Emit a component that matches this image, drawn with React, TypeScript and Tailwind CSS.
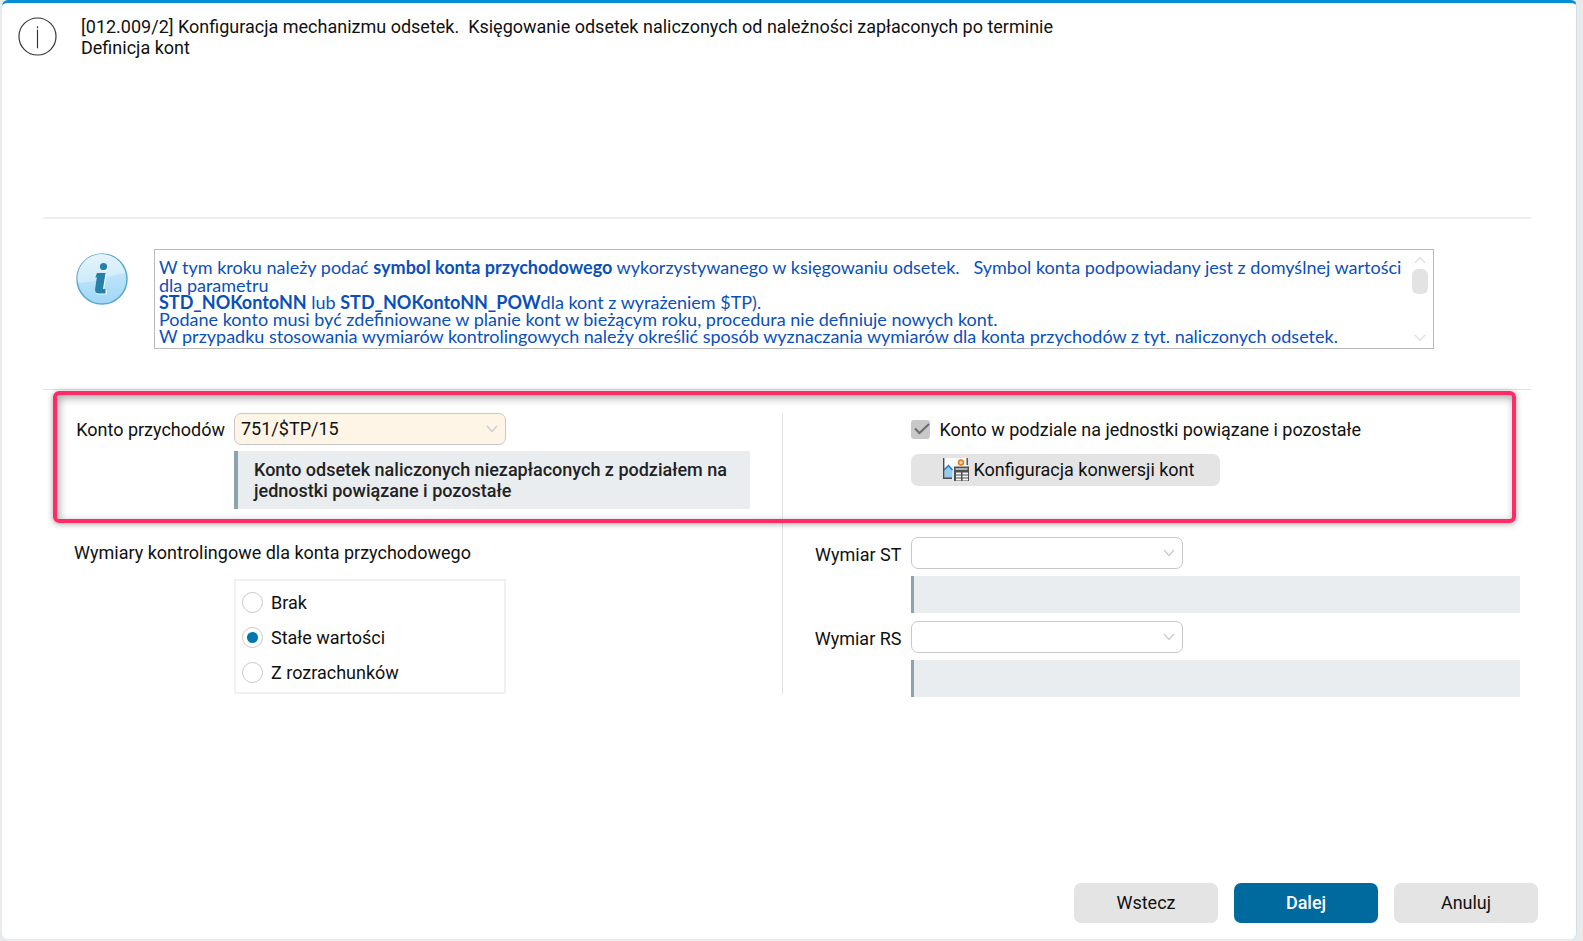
import { useState } from "react"
import type { ReactNode } from "react"

const dimensionModes = ["Brak", "Stałe wartości", "Z rozrachunków"]

function Chevron({ className, up }: { className?: string; up?: boolean }) {
  return (
    <svg viewBox="0 0 12 8" className={`h-2 w-3 ${className ?? ""}`} fill="none" stroke="currentColor" strokeWidth="1.5">
      <path d={up ? "M1 7 L6 1.5 L11 7" : "M1 1 L6 6.5 L11 1"} />
    </svg>
  )
}

function SelectBox({ id, options, filled }: { id: string; options: string[]; filled?: boolean }) {
  return (
    <div className="relative w-[272px]">
      <select
        id={id}
        className={`block h-8 w-full appearance-none rounded-[7px] border border-[#c8c8c8] pb-[2px] pl-[6px] pr-7 outline-none ${
          filled ? "bg-[#fff5e6]" : "bg-white"
        }`}
      >
        {options.map((option) => (
          <option key={option}>{option}</option>
        ))}
      </select>
      <Chevron className="pointer-events-none absolute right-2 top-3 text-[#cccccc]" />
    </div>
  )
}

function FooterButton({ children, primary }: { children: ReactNode; primary?: boolean }) {
  return (
    <button
      type="button"
      className={`h-10 w-36 rounded-[7px] pb-[2px] ${primary ? "bg-[#006a9f] font-medium text-white" : "bg-[#e4e4e4]"}`}
    >
      {children}
    </button>
  )
}

function InfoBadge() {
  return (
    <svg viewBox="0 0 52 52" className="size-[52px] shrink-0">
      <defs>
        <linearGradient id="badge" x1="0" y1="0" x2="0" y2="1">
          <stop offset="0" stopColor="#d3edf9" />
          <stop offset="1" stopColor="#9fd7f8" />
        </linearGradient>
        <linearGradient id="gloss" x1="0" y1="0" x2="0" y2="1">
          <stop offset="0" stopColor="#e3f4fc" />
          <stop offset="1" stopColor="#cfeafa" />
        </linearGradient>
      </defs>
      <circle cx="26" cy="26" r="25" fill="url(#badge)" stroke="#5ba7cb" strokeWidth="1.5" />
      <path d="M2 30 A24 24 0 1 1 49 20 C36 21 22 30 2 30Z" fill="url(#gloss)" />
      <g fill="#f4fbff">
        <circle cx="28.5" cy="14.5" r="3.6" />
        <path d="M21 21.5 h9.5 l-2.5 15.5 h3 v4.5 h-8 q-4 0 -3.4 -4 l1.8 -11.5 h-1.5z" />
      </g>
      <g fill="#2681aa">
        <circle cx="27.5" cy="13.5" r="3.6" />
        <path d="M21 20 h8.5 l-2.5 16 h2.5 v4.5 h-6.5 q-4.500 0 -3.9 -4.5 l1.7 -11.5 h-1.5z" />
      </g>
    </svg>
  )
}

function ConversionIcon() {
  return (
    <svg viewBox="0 0 26 23" className="h-[23px] w-[26px] shrink-0">
      <path d="M1 0 H24 V12 H10 V21 H1Z" fill="#fafafa" />
      <path d="M1.5 12 L5.5 7.5 L9.5 12 V20 H1.5Z" fill="#91cbf0" />
      <path d="M1 12 L5.5 7.5 L9.5 12" fill="none" stroke="#1c78c8" strokeWidth="1.5" />
      <path d="M0.7 0 V20.3 H9" fill="none" stroke="#4a4a4a" strokeWidth="1.4" />
      <path d="M24.2 0 V7" stroke="#4a4a4a" strokeWidth="1.4" />
      <circle cx="18" cy="4.5" r="2.4" fill="#fbd7b5" stroke="#e87d1e" strokeWidth="1.6" />
      <path d="M11 8.5 H26 V23 H11Z" fill="#505050" />
      <path d="M12.5 11 H24.500" stroke="#f4f4f4" strokeWidth="1.2" />
      <path d="M13 15.500 H18 M19.5 15.5 H25 M13 18.500 H18 M19.5 18.5 H25 M13 21.500 H18 M19.5 21.5 H25" stroke="#f4f4f4" strokeWidth="1.8" />
    </svg>
  )
}

export default function App() {
  const [mode, setMode] = useState("Stałe wartości")

  return (
    <div className="flex min-h-screen flex-col bg-[#e9eaeb] pb-[2px] pl-[2px] pr-[6px] font-['Roboto',sans-serif] text-[18px] leading-[21px] text-[#111111]">
      <main className="flex flex-1 flex-col rounded-md border-r border-t-[3px] border-r-[#cfe0ea] border-t-[#058dd8] bg-white">
        <header className="flex h-[214px] items-start gap-[24px] pl-[16px] pt-[13px]">
          <svg viewBox="0 0 40 40" className="mt-px size-[39px] shrink-0" fill="none" stroke="#333333">
            <circle cx="20" cy="20" r="19" strokeWidth="1.2" />
            <path d="M20 9.5 V11.5 M20 13 V32" strokeWidth="1.2" />
          </svg>
          <h1 className="whitespace-pre-wrap">
            {"[012.009/2] Konfiguracja mechanizmu odsetek.  Księgowanie odsetek naliczonych od należności zapłaconych po terminie\nDefinicja kont"}
          </h1>
        </header>

        <section className="ml-[41px] mr-[45px] flex h-[173px] items-start gap-[26px] border-b border-t-2 border-b-[#e2e2e2] border-t-[#eeeeee] pl-[33px] pr-[97px] pt-[30px]">
          <div className="pt-1">
            <InfoBadge />
          </div>
          <div className="flex h-[100px] flex-1 justify-between overflow-hidden border border-[#b9b9b9] pl-[4px] pr-[5px] font-['Lato',sans-serif] text-[18px] leading-[17px] text-[#0a50bb]">
            <div className="flex-1 pr-2 pt-2">
              <p className="whitespace-pre-wrap leading-[18px]">
                W tym kroku należy podać <b>symbol konta przychodowego</b>
                {" wykorzystywanego w księgowaniu odsetek.   Symbol konta podpowiadany jest z domyślnej wartości dla parametru"}
              </p>
              <p>
                <b>STD_NOKontoNN</b> lub <b>STD_NOKontoNN_POW</b>dla kont z wyrażeniem $TP).
              </p>
              <p>Podane konto musi być zdefiniowane w planie kont w bieżącym roku, procedura nie definiuje nowych kont.</p>
              <p>
                W przypadku stosowania wymiarów kontrolingowych należy określić sposób wyznaczania wymiarów dla konta
                przychodów z tyt. naliczonych odsetek.
              </p>
            </div>
            <div className="flex w-4 flex-col items-center pb-[6px] pt-[6px] text-[#e2e2e2]">
              <Chevron up />
              <div className="mt-[5px] h-[25px] w-4 rounded-md bg-[#e3e3e3]" />
              <Chevron className="mt-auto" />
            </div>
          </div>
        </section>

        <section className="relative ml-[41px] mr-[56px] grid grid-cols-2 pt-[23px]">
          {/* frame around the account row */}
          <div className="pointer-events-none absolute left-[10px] right-1 top-px h-[132px] rounded-md border-4 border-[#ff2a68] shadow-[0_1px_6px_rgba(0,0,0,0.35),inset_2px_3px_8px_rgba(0,0,0,0.35)]" />

          <div className="grid grid-cols-[191px_1fr] content-start">
            <label htmlFor="account" className="pr-[9px] pt-[6px] text-right">
              Konto przychodów
            </label>
            <SelectBox id="account" options={["751/$TP/15"]} filled />
            <p className="col-start-2 mr-[32px] mt-[6px] h-[58px] border-l-4 border-[#8da3ad] bg-[#eaedf0] pl-[16px] pt-[8px] font-medium text-[#222222]">
              Konto odsetek naliczonych niezapłaconych z podziałem na jednostki powiązane i pozostałe
            </p>

            <fieldset className="col-span-2 mt-[33px]">
              <legend className="pl-[31px]">Wymiary kontrolingowe dla konta przychodowego</legend>
              <div className="ml-[191px] mt-[16px] flex h-[115px] w-[272px] flex-col justify-center gap-[14px] border-2 border-[#f0f0f0] pl-[6px] pt-[2px]">
                {dimensionModes.map((name) => (
                  <label key={name} className="flex items-center gap-2">
                    <input
                      type="radio"
                      name="mode"
                      checked={mode === name}
                      onChange={() => setMode(name)}
                      className="grid size-[21px] appearance-none place-items-center rounded-full border border-[#c8c8c8] bg-white checked:before:size-[11px] checked:before:rounded-full checked:before:bg-[#0076b0]"
                    />
                    {name}
                  </label>
                ))}
              </div>
            </fieldset>
          </div>

          <div className="flex flex-col border-l border-[#e2e2e2]">
            <div className="flex h-[124px] flex-col items-start pl-[128px]">
              <label className="flex items-center gap-[10px] pt-[6px]">
                <span className="relative size-[19px]">
                  <input type="checkbox" checked disabled className="block size-[19px] appearance-none rounded-[3px] bg-[#c8c8c8]" />
                  <svg viewBox="0 0 19 19" className="absolute left-0 top-0 size-[19px]" fill="none" stroke="#6b6b6b" strokeWidth="2">
                    <path d="M4 8.5 L8.5 13 L18 4" />
                  </svg>
                </span>
                Konto w podziale na jednostki powiązane i pozostałe
              </label>
              <button type="button" className="mt-[14px] flex h-8 w-[309px] items-center gap-[5px] rounded-[7px] bg-[#e4e4e4] pb-px pl-8">
                <ConversionIcon />
                Konfiguracja konwersji kont
              </button>
            </div>

            {["ST", "RS"].map((code) => (
              <div key={code} className="mb-[8px] grid grid-cols-[128px_1fr] last:-mb-[3px]">
                <label htmlFor={`dimension-${code}`} className="pr-[9px] pt-[7px] text-right">
                  Wymiar {code}
                </label>
                <SelectBox id={`dimension-${code}`} options={[""]} />
                <output
                  htmlFor={`dimension-${code}`}
                  className="col-start-2 mt-[7px] h-[37px] border-l-[3px] border-[#8da3ad] bg-[#eaedf0]"
                />
              </div>
            ))}
          </div>
        </section>

        <footer className="mt-auto flex justify-end gap-4 pb-4 pr-[38px] pt-8">
          <FooterButton>Wstecz</FooterButton>
          <FooterButton primary>Dalej</FooterButton>
          <FooterButton>Anuluj</FooterButton>
        </footer>
      </main>
    </div>
  )
}
